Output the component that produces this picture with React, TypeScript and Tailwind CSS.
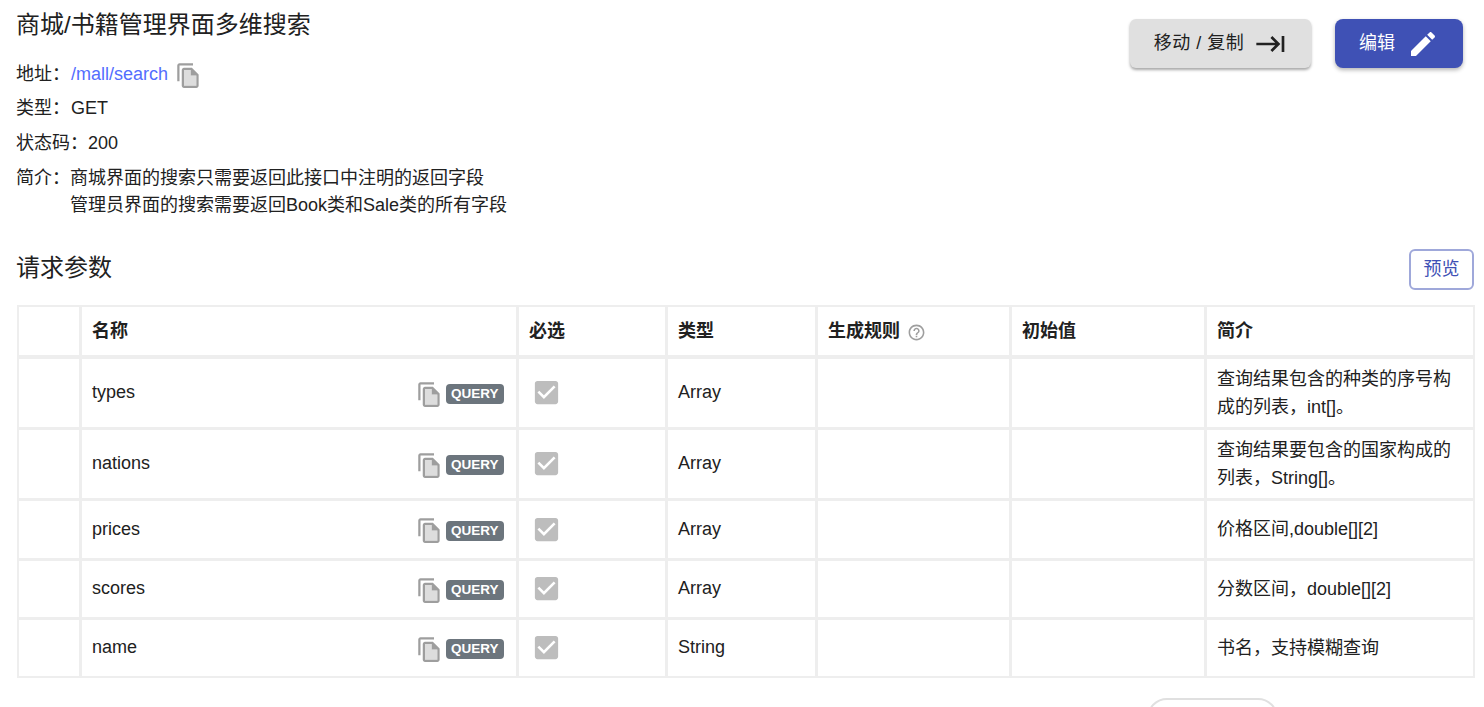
function CopyIcon() {
  return (
    <svg viewBox="0 0 24 24" className="w-[27px] h-[27px] shrink-0 block" fill="#9e9e9e">
      <path d="M14 7H8v14h11v-9h-5z" opacity="0.35" />
      <path d="M15 5H8c-1.1 0-1.99.9-1.99 2L6 21c0 1.1.89 2 1.99 2H19c1.1 0 2-.9 2-2V11l-6-6zM8 21V7h6v5h5v9H8z" />
      <path d="M16 1H4c-1.1 0-2 .9-2 2v14h2V3h12V1z" />
    </svg>
  );
}

function Check() {
  return (
    <svg viewBox="0 0 24 24" className="w-[31px] h-[31px] block ml-[1.5px]" fill="#bdbdbd">
      <path d="M19 3H5c-1.11 0-2 .9-2 2v14c0 1.1.89 2 2 2h14c1.11 0 2-.9 2-2V5c0-1.1-.89-2-2-2zm-9 14l-5-5 1.41-1.41L10 14.17l7.59-7.59L19 8l-9 9z" />
    </svg>
  );
}

const rows = [
  { name: "types", type: "Array", desc: "查询结果包含的种类的序号构成的列表，int[]。", h: "h-[71px]" },
  { name: "nations", type: "Array", desc: "查询结果要包含的国家构成的列表，String[]。", h: "h-[71px]" },
  { name: "prices", type: "Array", desc: "价格区间,double[][2]", h: "h-[60px]" },
  { name: "scores", type: "Array", desc: "分数区间，double[][2]", h: "h-[59px]" },
  { name: "name", type: "String", desc: "书名，支持模糊查询", h: "h-[59px]" },
];

const th = "border-[3px] border-[#eeeeee] border-t-2 border-b-4 first:border-l-2 last:border-r-2 px-[10.5px] text-left font-bold align-middle";
const td = "border-[3px] border-[#eeeeee] first:border-l-2 last:border-r-2 px-[10.5px] align-middle";

export default function App() {
  return (
    <div className="h-[707px] overflow-hidden bg-white text-[#212121] text-[18px] font-['Liberation_Sans','Noto_Sans_CJK_SC',sans-serif]">
      <div className="pl-[17px] pr-[10px]">
        <div className="flex justify-between">
          <div className="-ml-px">
            <h1 className="text-2xl leading-[28px] pt-[11px] font-normal">商城/书籍管理界面多维搜索</h1>
            <div className="mt-[18px] flex items-center h-[34px]">
              <span className="w-[55px]">地址：</span>
              <span className="text-[#536dfe]">/mall/search</span>
              <span className="ml-[7px] mt-[2px]"><CopyIcon /></span>
            </div>
            <div className="flex items-center h-[35px]">
              <span className="w-[55px]">类型：</span>
              <span>GET</span>
            </div>
            <div className="flex items-center h-[34px]">
              <span>状态码：</span>
              <span>200</span>
            </div>
            <div className="flex pt-[5px] leading-[27px]">
              <span className="w-[54px]">简介：</span>
              <div>
                <div>商城界面的搜索只需要返回此接口中注明的返回字段</div>
                <div>管理员界面的搜索需要返回Book类和Sale类的所有字段</div>
              </div>
            </div>
          </div>
          <div className="flex gap-6 pt-[19px] pr-[11px] h-fit">
            <button className="w-[181px] h-[49px] rounded-[6px] bg-[#e0e0e0] flex items-center justify-center gap-[11px] text-[18px] tracking-[0.5px] shadow-[0_2px_3px_rgba(0,0,0,0.35)]">
              <span>移动 / 复制</span>
              <svg viewBox="0 0 24 24" className="w-[32px] h-[32px]" fill="#212121">
                <path d="M11.59 7.41 15.17 11H1v2h14.17l-3.59 3.58L13 18l6-6-6-6-1.41 1.41zM20 6v12h2V6h-2z" />
              </svg>
            </button>
            <button className="w-[128px] h-[49px] rounded-[8px] bg-[#3f51b5] text-white flex items-center justify-center gap-3 text-[18px] shadow-[0_2px_4px_rgba(0,0,0,0.3)]">
              <span>编辑</span>
              <svg viewBox="0 0 24 24" className="w-[32px] h-[32px]" fill="#ffffff">
                <path d="M3 17.25V21h3.75L17.81 9.94l-3.75-3.75L3 17.25zM20.71 7.04c.39-.39.39-1.02 0-1.41l-2.34-2.34c-.39-.39-1.02-.39-1.41 0l-1.83 1.83 3.75 3.75 1.83-1.83z" />
              </svg>
            </button>
          </div>
        </div>

        <div className="flex justify-between items-center mt-[30px] h-[41px]">
          <h2 className="text-2xl font-normal -ml-px pb-[4px]">请求参数</h2>
          <button className="w-[65px] h-[41px] rounded-[6px] border-2 border-[#9fa8da] text-[#3f51b5]">预览</button>
        </div>

        <table className="mt-[15px] w-[1456px] table-fixed border-collapse">
          <colgroup>
            <col className="w-[62px]" />
            <col className="w-[437px]" />
            <col className="w-[149px]" />
            <col className="w-[150px]" />
            <col className="w-[194px]" />
            <col className="w-[195px]" />
            <col className="w-[269px]" />
          </colgroup>
          <thead>
            <tr className="h-[51px]">
              <th className={th}></th>
              <th className={th}>名称</th>
              <th className={th}>必选</th>
              <th className={th}>类型</th>
              <th className={th}>
                <span className="inline-flex items-center gap-[7px]">
                  生成规则
                  <svg viewBox="0 0 24 24" className="w-[19px] h-[19px] mt-[3px]" fill="#9e9e9e">
                    <path d="M11 18h2v-2h-2v2zm1-16C6.48 2 2 6.48 2 12s4.48 10 10 10 10-4.48 10-10S17.52 2 12 2zm0 18c-4.41 0-8-3.59-8-8s3.59-8 8-8 8 3.59 8 8-3.59 8-8 8zm0-14c-2.21 0-4 1.79-4 4h2c0-1.1.9-2 2-2s2 .9 2 2c0 2-3 1.75-3 5h2c0-2.25 3-2.5 3-5 0-2.21-1.79-4-4-4z" />
                  </svg>
                </span>
              </th>
              <th className={th}>初始值</th>
              <th className={th}>简介</th>
            </tr>
          </thead>
          <tbody>
            {rows.map((r, i) => {
              const cell = i === rows.length - 1 ? `${td} border-b-2` : td;
              return (
                <tr key={r.name} className={r.h}>
                  <td className={cell}></td>
                  <td className={cell}>
                    <div className="flex items-center justify-between">
                      <span>{r.name}</span>
                      <span className="flex items-center gap-[3px] mt-[3px] mr-[1.5px]">
                        <CopyIcon />
                        <span className="h-5 px-[5px] rounded-[4px] bg-[#6c757d] text-white text-[13.5px] font-bold leading-5">QUERY</span>
                      </span>
                    </div>
                  </td>
                  <td className={cell}><Check /></td>
                  <td className={cell}>{r.type}</td>
                  <td className={cell}></td>
                  <td className={cell}></td>
                  <td className={`${cell} leading-[28px]`}>{r.desc}</td>
                </tr>
              );
            })}
          </tbody>
        </table>

        <div className="flex justify-end mt-[20px] pr-[196px]">
          <div className="w-[131px] h-10 rounded-full border-2 border-[#e0e0e0] bg-white"></div>
        </div>
      </div>
    </div>
  );
}
